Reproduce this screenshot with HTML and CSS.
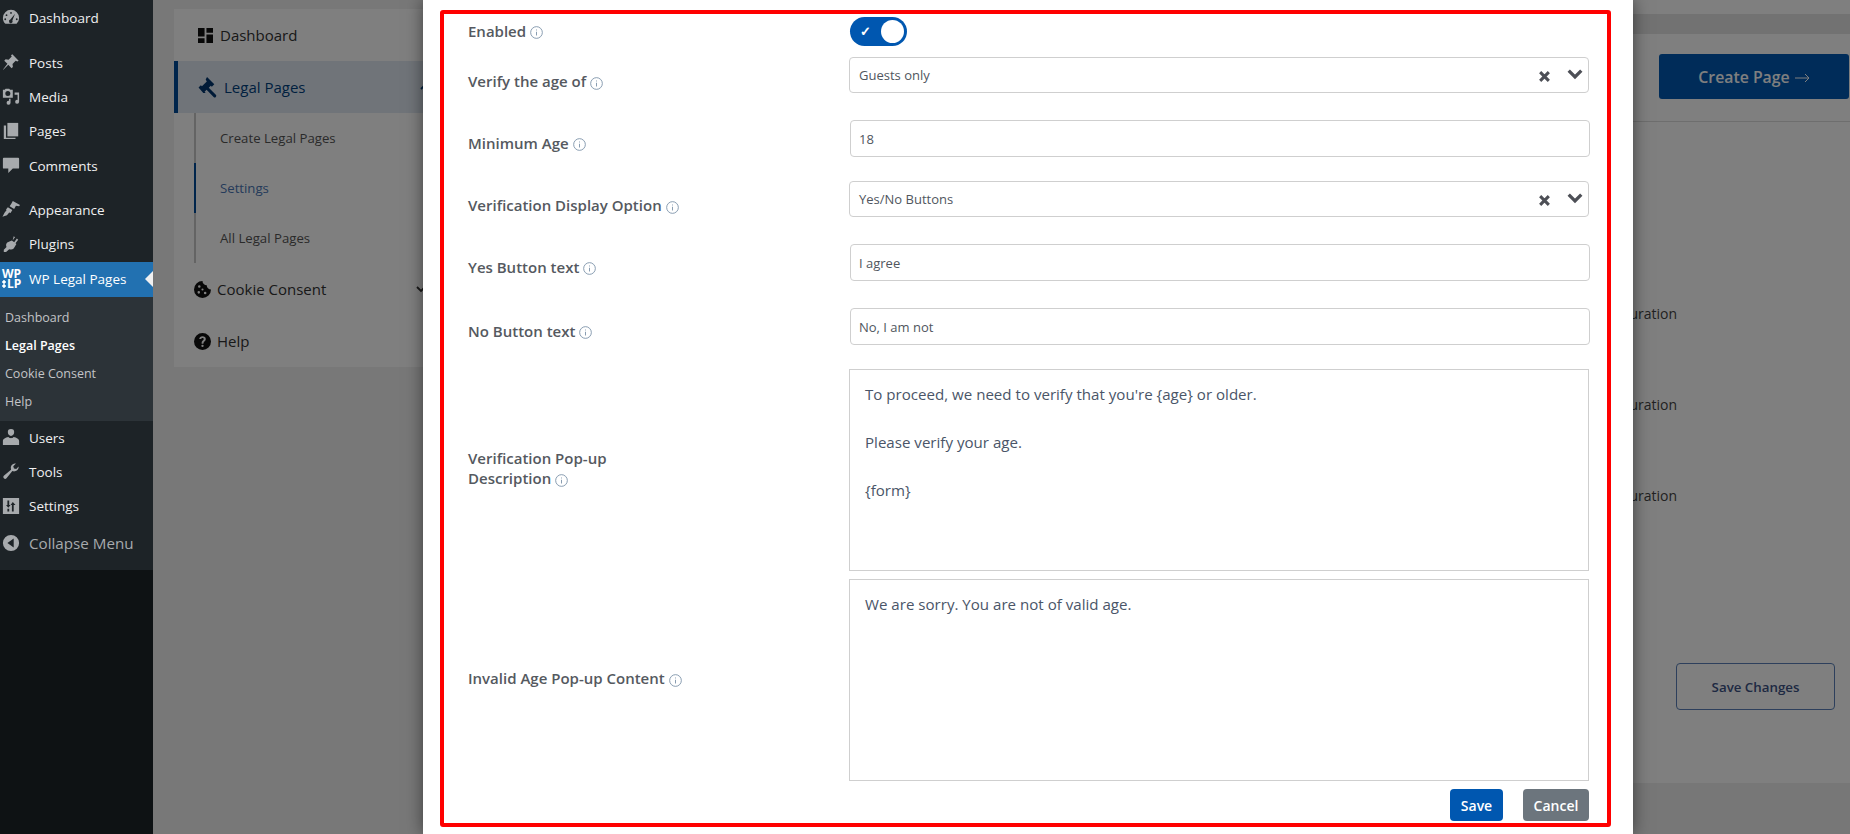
FILE: index.html
```html
<!DOCTYPE html>
<html lang="en">
<head>
<meta charset="utf-8">
<title>WP Legal Pages</title>
<link rel="stylesheet" href="styles.css">
</head>
<body>
<div class="app">
  <aside class="sidebar">
    <nav class="menu">
      <a class="item item-first"><svg class="wpi" viewBox="0 0 20 20"><path fill-rule="evenodd" d="M10 2a9 9 0 0 0-9 9c0 2.700 1 5 2.800 6.600h12.400A9 9 0 0 0 19 11a9 9 0 0 0-9-9zM10 4.500a1 1 0 1 1 0 2 1 1 0 0 1 0-2zM5 7a1 1 0 1 1 0 2 1 1 0 0 1 0-2zM3.600 11.500a1 1 0 1 1 0 2 1 1 0 0 1 0-2zM16.400 11.500a1 1 0 1 1 0 2 1 1 0 0 1 0-2zM14.500 6.500l-3 7.300a2 2 0 1 1-2.200-.9z"/></svg><span>Dashboard</span></a>
      <a class="item item-posts"><svg class="wpi" viewBox="0 0 20 20"><path d="M11.500 1.500l7 7-1.500 1-1.800-.8-3.500 3.500.4 3.300-1.500 1.500L7 13l-5.500 5.500-.3-.3L6 12 2.500 8.500 4 7l3.300.4 3.500-3.500-.8-1.400z"/></svg><span>Posts</span></a>
      <a class="item"><svg class="wpi" viewBox="0 0 20 20"><path fill-rule="evenodd" d="M1 3h2l1-1h4l1 1h3v9H1zM6.500 4.500a2.800 2.800 0 1 0 0 5.600 2.800 2.800 0 0 0 0-5.600zM14 6h5v10.500a2.200 2.200 0 1 1-1.700-2.100V8.500H14zM9.500 13v4.500a2.200 2.200 0 1 1-1.700-2.100V13z"/></svg><span>Media</span></a>
      <a class="item"><svg class="wpi" viewBox="0 0 20 20"><path d="M6 1h12v15H6z"/><path d="M2 4h2.500v13.500H15V19H2z"/></svg><span>Pages</span></a>
      <a class="item"><svg class="wpi" viewBox="0 0 20 20"><path d="M2 2h16a1 1 0 0 1 1 1v10a1 1 0 0 1-1 1h-6l-5 5v-5H2a1 1 0 0 1-1-1V3a1 1 0 0 1 1-1z"/></svg><span>Comments</span></a>
      <a class="item item-app"><svg class="wpi" viewBox="0 0 20 20"><path d="M12 1l8 4.500-1 1.500-3.500-.5-2 3.500-5-3 2-3.200zM6.500 8l5 3-2 3.500-1.500-.5-2.500 3L.5 18.500 3 14l2-2.500-.5-1z"/></svg><span>Appearance</span></a>
      <a class="item"><svg class="wpi" viewBox="0 0 20 20"><path d="M13 1.500l1.500 1-3 4 2 1.500 3-4 1.500 1.200-3 4 1 .8-3 5c-1.500 1.500-3.500 1.500-5 .7L4.500 19H2v-2.500l3-3.300c-.8-1.500-.5-3.500.8-4.800l5-2.200 .8.800z"/></svg><span>Plugins</span></a>
      <a class="item item-active"><span class="wplp">WP<br><i class="dots"></i>LP</span><span>WP Legal Pages</span></a>
      <div class="submenu">
        <a>Dashboard</a>
        <a class="sub-current">Legal Pages</a>
        <a>Cookie Consent</a>
        <a>Help</a>
      </div>
      <a class="item"><svg class="wpi" viewBox="0 0 20 20"><path d="M10 1a3.500 3.500 0 0 1 3.500 3.800c0 2.200-1.500 4-3.500 4s-3.500-1.800-3.500-4A3.500 3.500 0 0 1 10 1zM13 10c3 .6 6 2 6 4.500V19H1v-4.500C1 12 4 10.600 7 10c1 1 2 1.300 3 1.300s2-.3 3-1.300z"/></svg><span>Users</span></a>
      <a class="item"><svg class="wpi" viewBox="0 0 20 20"><path d="M18.500 5a5 5 0 0 1-7 5L5 18a2 2 0 1 1-3-2.800l8-6.500a5 5 0 0 1 5.500-7l-3 3 .8 2.500 2.500.7z"/></svg><span>Tools</span></a>
      <a class="item"><svg class="wpi" viewBox="0 0 20 20"><path fill-rule="evenodd" d="M1 1h18v18H1zM6 4v5H4.500L7 12 9.500 9H8V4zM13 16V9h2l-3-3.500L9.500 9H11v7zM6 13v3h2v-3z"/></svg><span>Settings</span></a>
      <a class="item item-collapse"><svg class="wpi" viewBox="0 0 20 20"><path fill-rule="evenodd" d="M10 1a9 9 0 1 1 0 18 9 9 0 0 1 0-18zM13 5L6 10l7 5z"/></svg><span>Collapse Menu</span></a>
    </nav>
  </aside>

  <main class="main">
    <section class="panel">
      <a class="pnav"><svg class="pico" viewBox="0 0 16 16"><path d="M0 0h7v9H0zM9 0h7v5H9zM0 11h7v5H0zM9 7h7v9H9z"/></svg>Dashboard</a>
      <a class="pnav pnav-active"><svg class="pico-gavel" viewBox="0 0 20 20"><path d="M8.200 1l6.600 6.600-2.200 2.200-1-1-1.800 1.800 6.400 6.400a1.400 1.400 0 0 1-2 2L7.800 12.600 6 14.400l1 1-2.200 0L.5 10.500 2.600 8.400l1 1L8 5l-1-1.800z"/></svg>Legal Pages<svg class="caret" viewBox="0 0 12 12"><path d="M2 8l4-4 4 4" fill="none" stroke="currentColor" stroke-width="1.800"/></svg></a>
      <div class="psub">
        <a>Create Legal Pages</a>
        <a class="psub-current">Settings</a>
        <a>All Legal Pages</a>
      </div>
      <a class="pnav pnav-tight"><svg class="pico-round" viewBox="0 0 16 16"><path fill-rule="evenodd" d="M8 0a8 8 0 1 0 8 8 4 4 0 0 1-4-4 4 4 0 0 1-4-4zM5 4a1.200 1.200 0 1 1 0 2.400A1.200 1.200 0 0 1 5 4zM4.500 9.500a1.200 1.200 0 1 1 0 2.400 1.200 1.200 0 0 1 0-2.400zM10.500 10a1.200 1.200 0 1 1 0 2.400 1.200 1.200 0 0 1 0-2.400zM8 7a1 1 0 1 1 0 2 1 1 0 0 1 0-2z"/></svg>Cookie Consent<svg class="caret" viewBox="0 0 12 12"><path d="M2 4l4 4 4-4" fill="none" stroke="currentColor" stroke-width="1.800"/></svg></a>
      <a class="pnav pnav-tight"><svg class="pico-round" viewBox="0 0 16 16"><path fill-rule="evenodd" d="M8 0a8 8 0 1 1 0 16A8 8 0 0 1 8 0zM8 11a1.100 1.100 0 1 0 0 2.200A1.100 1.100 0 0 0 8 11zM8 3C6.300 3 5 4 4.900 5.700h1.900c.1-.7.500-1 1.200-1s1.200.4 1.200 1c0 1.300-2 1.300-2 3.600V10h1.700v-.5c0-1.500 2.200-1.700 2.200-3.900C11.100 4 9.800 3 8 3z"/></svg>Help</a>
    </section>

    <section class="backdrop-page">
      <div class="band-top"></div>
      <div class="band-grey"></div>
      <header class="page-head"><a class="create-btn">Create Page<svg class="arrow" viewBox="0 0 15 10"><path d="M0 5h14M10 1l4 4-4 4"/></svg></a></header>
      <div class="page-body">
        <div class="rows">
          <p>Configuration</p>
          <p>Configuration</p>
          <p>Configuration</p>
        </div>
        <a class="save-changes">Save Changes</a>
      </div>
      <div class="page-foot"></div>
    </section>

    <div class="overlay"></div>

    <div class="modal">
      <form class="frame">
        <div class="row row-toggle">
          <label class="lbl">Enabled <svg class="info" viewBox="0 0 14 14"><circle cx="7" cy="7" r="6.300" /><path d="M7 6.200v4M7 3.800v1"/></svg></label>
          <span class="toggle"><span class="check">✓</span><span class="knob"></span></span>
        </div>
        <div class="row row-select gap-27">
          <label class="lbl lbl-low">Verify the age of <svg class="info" viewBox="0 0 14 14"><circle cx="7" cy="7" r="6.300" /><path d="M7 6.200v4M7 3.800v1"/></svg></label>
          <div class="select"><span>Guests only</span>
            <svg class="clear" viewBox="0 0 12 12"><path d="M2 2l8 8M10 2l-8 8"/></svg>
            <svg class="chev" viewBox="0 0 14 10"><path d="M1.500 2L7 7.500 12.500 2"/></svg></div>
        </div>
        <div class="row gap-24">
          <label class="lbl lbl-low">Minimum Age <svg class="info" viewBox="0 0 14 14"><circle cx="7" cy="7" r="6.300" /><path d="M7 6.200v4M7 3.800v1"/></svg></label>
          <div class="input">18</div>
        </div>
        <div class="row row-select gap-27">
          <label class="lbl lbl-low">Verification Display Option <svg class="info" viewBox="0 0 14 14"><circle cx="7" cy="7" r="6.300" /><path d="M7 6.200v4M7 3.800v1"/></svg></label>
          <div class="select"><span>Yes/No Buttons</span>
            <svg class="clear" viewBox="0 0 12 12"><path d="M2 2l8 8M10 2l-8 8"/></svg>
            <svg class="chev" viewBox="0 0 14 10"><path d="M1.500 2L7 7.500 12.500 2"/></svg></div>
        </div>
        <div class="row gap-27">
          <label class="lbl lbl-low">Yes Button text <svg class="info" viewBox="0 0 14 14"><circle cx="7" cy="7" r="6.300" /><path d="M7 6.200v4M7 3.800v1"/></svg></label>
          <div class="input">I agree</div>
        </div>
        <div class="row gap-24">
          <label class="lbl lbl-low">No Button text <svg class="info" viewBox="0 0 14 14"><circle cx="7" cy="7" r="6.300" /><path d="M7 6.200v4M7 3.800v1"/></svg></label>
          <div class="input">No, I am not</div>
        </div>
        <div class="row row-area gap-8">
          <label class="lbl lbl-wrap">Verification Pop-up Description <svg class="info" viewBox="0 0 14 14"><circle cx="7" cy="7" r="6.300" /><path d="M7 6.200v4M7 3.800v1"/></svg></label>
          <div class="area"><p>To proceed, we need to verify that you're {age} or older.</p><p>Please verify your age.</p><p>{form}</p></div>
        </div>
        <div class="row row-area gap-8">
          <label class="lbl">Invalid Age Pop-up Content <svg class="info" viewBox="0 0 14 14"><circle cx="7" cy="7" r="6.300" /><path d="M7 6.200v4M7 3.800v1"/></svg></label>
          <div class="area"><p>We are sorry. You are not of valid age.</p></div>
        </div>
        <div class="actions">
          <a class="btn btn-save">Save</a>
          <a class="btn btn-cancel">Cancel</a>
        </div>
      </form>
    </div>
  </main>
</div>
</body>
</html>
```
FILE: styles.css
```css
* { box-sizing: border-box; }
html, body { margin: 0; height: 100%; overflow: hidden; }
body { font-family: "Open Sans", "Noto Sans", sans-serif; }
a { text-decoration: none; color: inherit; display: block; }
p { margin: 0; }

.app { display: flex; width: 1850px; height: 834px; }

/* WordPress admin sidebar */
.sidebar { width: 153px; flex: none; background: #0e1214; }
.menu { background: #1d2327; height: 570px; color: #f0f0f1; font-size: 13.500px; }
.item { display: flex; align-items: center; height: 34.330px; padding: 0 0 1px 29px; position: relative; white-space: nowrap; }
.wpi { position: absolute; left: 2px; top: 50%; margin-top: -10px; width: 18px; height: 18px; fill: #a7aaad; }
.item-first { height: 36px; }
.item-posts { margin-top: 10px; }
.item-app { margin-top: 10px; }
.item-active { background: #2271b1; color: #fff; height: 35px; }
.item-active::after { content: ""; position: absolute; right: 0; top: 9px; border: 8px solid transparent; border-right-color: #f0f0f1; border-left-width: 0; }
.wplp { position: absolute; left: 2px; top: 7px; display: block; font-size: 12px; font-weight: 700; line-height: 10px; color: #fff; }
.dots { display: inline-block; width: 4px; height: 8px; margin-right: 1px; background: radial-gradient(circle at center, #fff 1.500px, transparent 1.800px) 0 0 / 4px 4px; }
.submenu { background: #2c3338; height: 124px; padding-top: 7px; font-size: 12.500px; color: #c3c4c7; }
.submenu a { height: 28px; line-height: 28px; padding-left: 5px; }
.sub-current { color: #fff; font-weight: 600; }
.item-collapse { height: 40px; font-size: 15.200px; color: #a7aaad; }

/* underlying page */
.main { flex: 1; position: relative; display: flex; background: #f0f0f1; overflow: hidden; }
.panel { width: 300px; flex: none; height: 358px; margin: 9px 0 0 21px; background: #fff; color: #333; font-size: 15px; }
.pnav { display: flex; align-items: center; height: 52px; padding-left: 24px; position: relative; color: #323232; }
.pico { width: 15px; height: 15px; margin-right: 7px; fill: #111; }
.pnav-active { background: #e0e9f3; border-left: 4px solid #004a99; padding-left: 20px; color: #00417f; }
.pico-gavel { width: 22px; height: 22px; margin-right: 4px; fill: #00356e; }
.pico-round { width: 17px; height: 17px; margin-right: 6px; fill: #111; }
.pnav-tight { padding-left: 20px; }
.caret { position: absolute; left: 241px; top: 20px; width: 12px; height: 12px; }
.psub { margin-left: 20px; height: 150px; border-left: 2px solid #c8c8c8; font-size: 13.200px; color: #555; }
.psub a { height: 50px; line-height: 50px; padding-left: 24px; margin-left: -2px; border-left: 2px solid transparent; }
.psub .psub-current { border-left-color: #004a99; color: #4a76b5; }

.backdrop-page { flex: 1; margin-left: 20px; display: flex; flex-direction: column; background: #fff; }
.band-top { height: 14px; flex: none; }
.band-grey { height: 20px; flex: none; background: #e5e5e5; }
.page-head { height: 88px; flex: none; border-bottom: 1px solid #dcdcdc; padding: 20px 1px 0 0; display: flex; justify-content: flex-end; align-items: flex-start; }
.create-btn { width: 190px; height: 45px; border-radius: 3px; background: #0059b3; color: #fff; display: flex; align-items: center; justify-content: center; font-size: 15.800px; font-weight: 600; }
.arrow { width: 15px; height: 10px; margin: 2px 0 0 5px; fill: none; stroke: #fff; stroke-width: 1; }
.page-body { flex: 1; position: relative; overflow: hidden; }
.rows { display: flex; flex-direction: column; align-items: flex-end; padding-top: 180px; padding-right: 173px; gap: 67px; font-size: 14px; color: #444; }
.rows p { line-height: 24px; }
.save-changes { position: absolute; right: 15px; bottom: 73px; width: 159px; height: 47px; border: 1px solid #5a7fb8; border-radius: 4px; color: #3d5285; display: flex; align-items: center; justify-content: center; font-size: 13.300px; font-weight: 600; }
.page-foot { height: 51px; flex: none; background: #efefef; }

.overlay { position: absolute; inset: 0; background: rgba(0,0,0,.5); }

/* modal */
.modal { position: absolute; left: 270px; top: 0; width: 1210px; height: 834px; background: #fff; box-shadow: 0 0 16px rgba(0,0,0,.5); padding: 10px 22px 0 17px; }
.frame { height: 817px; border: 4px solid #f00; border-radius: 3px; padding: 3px 18px 0 24px; display: flex; flex-direction: column; color: #4a4f57; }
.row { display: flex; align-items: center; height: 37px; }
.row-toggle { height: 29px; margin-bottom: 11px; }
.row-toggle .lbl { position: relative; top: -1px; }
.row-select { height: 36px; }
.row-area { height: 202px; }
.gap-27 { margin-bottom: 27px; }
.gap-24 { margin-bottom: 24px; }
.gap-8 { margin-bottom: 8px; }
.lbl { width: 381px; flex: none; font-size: 15px; font-weight: 600; line-height: 20px; color: #555960; }
.lbl-low { position: relative; top: 4px; }
.row-select .lbl-low { top: 6px; }
.row-area .lbl { position: relative; top: -2px; }
.lbl-wrap { padding-right: 170px; }
.info { width: 13px; height: 13px; vertical-align: -2.500px; margin-left: 0; fill: none; stroke: #8095ab; stroke-width: 1; }
.toggle { width: 57px; height: 29px; margin-left: 1px; border-radius: 15px; background: #0057b0; position: relative; display: block; }
.check { position: absolute; left: 10px; top: 6px; font-size: 13px; line-height: 16px; color: #fff; font-weight: 700; }
.knob { position: absolute; right: 3px; top: 3px; width: 23px; height: 23px; border-radius: 50%; background: #fff; }
.select, .input { flex: 1; height: 100%; border: 1px solid #cfcfcf; border-radius: 4px; display: flex; align-items: center; font-size: 13px; color: #50565e; background: #fff; }
.select { padding-left: 9px; position: relative; }
.input { margin-left: 1px; margin-right: -1px; padding-left: 8px; }
.clear { position: absolute; right: 37px; top: 12px; width: 13px; height: 13px; fill: none; stroke: #4d4f56; stroke-width: 2.800; }
.chev { position: absolute; right: 5px; top: 10px; width: 16px; height: 12px; fill: none; stroke: #4d4f56; stroke-width: 2.900; }
.area { flex: 1; height: 100%; border: 1px solid #cfcfcf; padding: 12px 15px; font-size: 15.100px; line-height: 24px; color: #4a5568; background: #fff; }
.area p { margin-bottom: 24px; }
.actions { display: flex; justify-content: flex-end; gap: 20px; }
.btn { height: 32px; border-radius: 4px; color: #fff; font-size: 14px; font-weight: 600; display: flex; align-items: center; justify-content: center; }
.btn-save { width: 53px; background: #0057b0; }
.btn-cancel { width: 66px; background: #6c757d; }
```
